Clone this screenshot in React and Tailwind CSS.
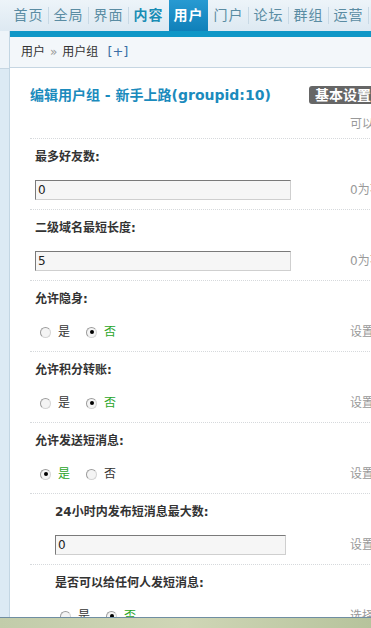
import React from 'react'

const tabs = ['首页', '全局', '界面', '内容', '用户', '门户', '论坛', '群组', '运营']

function Radio({ checked }) {
  return (
    <span className="w-[11px] h-[11px] rounded-full border border-[#9c9c9c] border-r-[#d4d4d4] border-b-[#d4d4d4] bg-[#f4f4f4] flex items-center justify-center">
      {checked && <span className="w-[4px] h-[4px] rounded-full bg-black"></span>}
    </span>
  )
}

function YesNo({ value }) {
  return (
    <div className="flex items-center pl-[10px]">
      <Radio checked={value} />
      <span className={`ml-[7px] ${value ? 'text-[#2aa52a]' : 'text-[#333]'}`}>是</span>
      <span className="ml-[16px]"><Radio checked={!value} /></span>
      <span className={`ml-[7px] ${!value ? 'text-[#2aa52a]' : 'text-[#333]'}`}>否</span>
    </div>
  )
}

function Field({ value, nested }) {
  return (
    <div className="pl-[5px]">
      <div className={`${nested ? 'w-[231px]' : 'w-[256px]'} h-[20px] bg-[#f6f6f6] border border-[#7a7a7a] border-r-[#cfcfcf] border-b-[#cfcfcf] pl-[2px] text-[12px] leading-[18px] text-[#222]`}>
        {value}
      </div>
    </div>
  )
}

function Section({ label, hint, children, nested }) {
  return (
    <div className="border-t border-dotted border-[#d6d9dc] pt-[9px] pb-[9px]">
      <div className={`h-[18px] leading-[18px] font-bold text-[#333] ${nested ? 'pl-[25px]' : 'pl-[5px]'}`}>{label}</div>
      <div className="mt-[14px] h-[20px] grid grid-cols-[320px_1fr] items-center">
        <div className={nested ? 'pl-[20px]' : ''}>{children}</div>
        <div className="text-[#999] whitespace-nowrap">{hint}</div>
      </div>
    </div>
  )
}

export default function App() {
  return (
    <div className="w-[371px] h-[628px] overflow-hidden flex flex-col bg-white text-[12px] font-['DejaVu_Sans','Noto_Sans_CJK_SC',sans-serif]">
      {/* 顶部菜单 */}
      <nav className="h-[31px] shrink-0 flex items-stretch pl-[9px] bg-gradient-to-b from-[#edf4f9] to-[#dde9f2] whitespace-nowrap">
        {tabs.map((t, i) => (
          <React.Fragment key={t}>
            {i > 0 && t !== '用户' && tabs[i - 1] !== '用户' && (
              <span className="self-center w-[1px] h-[17px] bg-[#c8d9e5]"></span>
            )}
            {(t === '用户' || tabs[i - 1] === '用户') && <span className="w-[1px]"></span>}
            <span
              className={`w-[39px] shrink-0 flex items-center justify-center text-[14px] tracking-[1px] ${
                t === '用户'
                  ? 'bg-gradient-to-b from-[#279ad2] to-[#0f80b9] text-white font-bold'
                  : t === '内容'
                  ? 'text-[#1a8db5] font-bold'
                  : 'text-[#5a8ca3]'
              }`}
            >
              {t}
            </span>
          </React.Fragment>
        ))}
        <span className="self-center w-[1px] h-[17px] bg-[#c8d9e5]"></span>
      </nav>

      <div className="flex flex-1 min-h-0">
        {/* 左侧栏 */}
        <div className="w-[9px] shrink-0 flex flex-col">
          <div className="h-[37px] bg-[#eef4f9]"></div>
          <div className="flex-1 bg-[#dceaf4] border-t border-[#c6d6e2]"></div>
        </div>

        <div className="flex-1 flex flex-col min-w-0 border-l border-[#c3d6e3] overflow-hidden">
          <div className="h-[6px] shrink-0 bg-[#0f97c7] -ml-[1px]"></div>
          <div className="h-[31px] shrink-0 bg-[#f3f7fa] border-b border-[#c6d6e2] flex items-center pl-[11px] whitespace-nowrap text-[#333]">
            <span>用户</span>
            <span className="mx-[5px] text-[#999]">»</span>
            <span>用户组</span>
            <span className="ml-[9px] text-[#3b6ea5] text-[13px]">[+]</span>
          </div>

          <div className="flex-1 min-h-0 pl-[20px] w-[560px]">
            <div className="pt-[18px] h-[36px] flex items-center whitespace-nowrap">
              <span className="w-[279px] shrink-0 text-[14px] font-bold text-[#1b8bbd]">编辑用户组 - 新手上路(groupid:10)</span>
              <span className="h-[18px] px-[6px] rounded-[3px] bg-[#666] text-white text-[14px] font-bold leading-[18px]">基本设置</span>
            </div>
            <div className="h-[34px] pt-[13px] leading-[14px] grid grid-cols-[320px_1fr]">
              <div></div>
              <div className="text-[#999] whitespace-nowrap">可以设置用户组的基本属性</div>
            </div>

            <Section label="最多好友数:" hint="0为不限制">
              <Field value="0" />
            </Section>
            <Section label="二级域名最短长度:" hint="0为不限制">
              <Field value="5" />
            </Section>
            <Section label="允许隐身:" hint="设置是否允许隐身">
              <YesNo value={false} />
            </Section>
            <Section label="允许积分转账:" hint="设置是否允许积分转账">
              <YesNo value={false} />
            </Section>
            <Section label="允许发送短消息:" hint="设置是否允许发送短消息">
              <YesNo value={true} />
            </Section>
            <Section label="24小时内发布短消息最大数:" hint="设置24小时内最多发送数" nested>
              <Field value="0" nested />
            </Section>
            <Section label="是否可以给任何人发短消息:" hint="选择是否可以发送" nested>
              <YesNo value={false} />
            </Section>
          </div>
        </div>
      </div>

      {/* 任务栏 */}
      <div className="h-[11px] shrink-0 border-t border-[#6f8ea2] bg-gradient-to-r from-[#c2ccaa] via-[#cfd6b6] to-[#b6c39c]"></div>
    </div>
  )
}
